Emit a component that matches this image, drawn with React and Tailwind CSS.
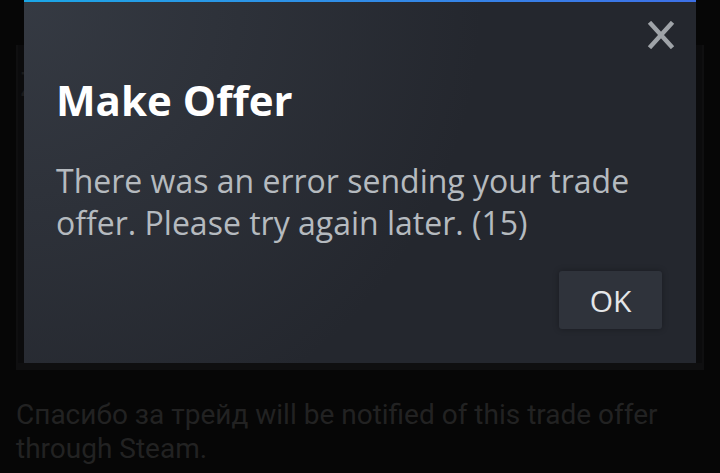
import React from "react";

function CloseIcon() {
  return (
    <svg width="28" height="28" viewBox="0 0 28 28" fill="none">
      <path d="M4 3 L24 25 M24 3 L4 25" stroke="#9fa3a8" strokeWidth="4.5" strokeLinecap="square" />
    </svg>
  );
}

export default function App() {
  return (
    <div className="relative w-[720px] h-[473px] overflow-hidden bg-[#060606] font-['Roboto',sans-serif]">
      {/* page behind the modal */}
      <div className="pt-[45px] pl-[16px] pr-[16px]">
        <div className="h-[325px] border-l-2 border-r-2 border-b-[7px] border-[#0f0f10] bg-[#0b0b0c] pl-[2px]">
          <div className="pt-[22px] text-[34px] leading-none text-[#1a1a1a]">Z</div>
        </div>
        <p className="mt-[28px] w-[680px] text-[28px] leading-[34px] text-[#222222]">
          Спасибо за трейд will be notified of this trade offer through Steam.
        </p>
      </div>

      {/* modal */}
      <div className="absolute left-[24px] top-0 w-[672px] h-[363px] [background:radial-gradient(circle_at_top_left,rgba(74,81,92,0.45)_0%,rgba(75,81,92,0)_60%),#24272e] font-['Open_Sans','Noto_Sans',sans-serif]">
        <div className="h-[2px] bg-gradient-to-r from-[#1aa6e6] to-[#3d70e6]" />
        <button className="absolute right-[21px] top-[21px]">
          <CloseIcon />
        </button>
        <div className="px-[32px] pt-[72px]">
          <h1 className="text-[42px] leading-[52px] font-bold text-white">Make Offer</h1>
          <p className="mt-[34px] text-[32px] leading-[42px] text-[#b5babf]">
            There was an error sending your trade offer. Please try again later. (15)
          </p>
          <div className="mt-[27px] flex justify-end pr-[2px]">
            <button className="w-[103px] h-[58px] rounded-[3px] bg-[#2f333b] text-[30px] text-[#e4e6e8] shadow-[0_0_6px_rgba(0,0,0,0.3)]">
              OK
            </button>
          </div>
        </div>
      </div>
    </div>
  );
}
